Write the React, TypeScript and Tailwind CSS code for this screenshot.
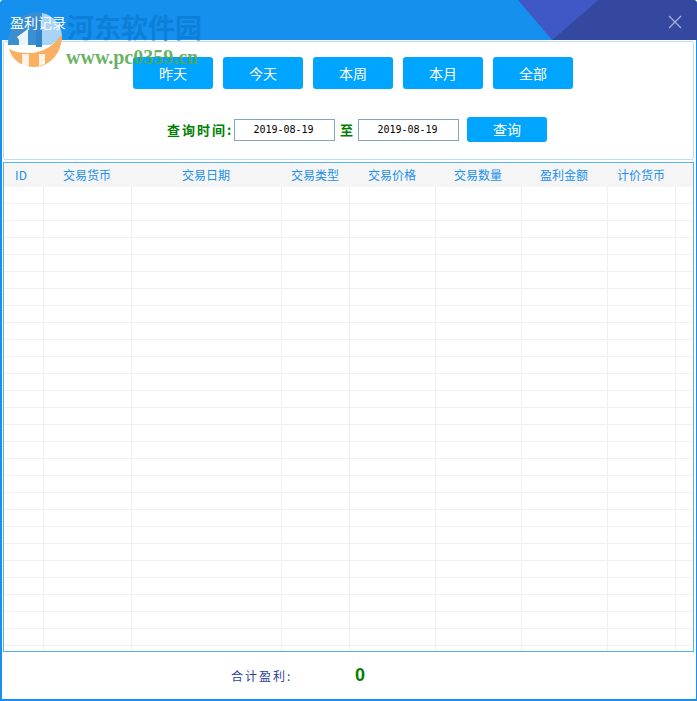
const columns = [
  { title: "ID", width: "w-[40px]", head: "w-[40px] pr-[6px]" },
  { title: "交易货币", width: "w-[88px]", head: "w-[88px] pr-[2px]" },
  { title: "交易日期", width: "w-[150px]", head: "w-[150px] pr-[2px]" },
  { title: "交易类型", width: "w-[68px]", head: "w-[68px] pr-[2px]" },
  { title: "交易价格", width: "w-[86px]", head: "w-[86px] pr-[2px]" },
  { title: "交易数量", width: "w-[86px]", head: "w-[86px] pr-[2px]" },
  { title: "盈利金额", width: "w-[86px]", head: "w-[86px] pr-[2px]" },
  { title: "计价货币", width: "w-[68px]", head: "w-[68px] pr-[2px]" },
];

const quickRanges = ["昨天", "今天", "本周", "本月", "全部"];
const rows = Array.from({ length: 28 }, (_, i) => i);

function Watermark() {
  return (
    <div className="absolute left-0 top-0 z-10 h-[75px] w-[210px] pointer-events-none">
      <svg className="absolute left-0 top-0" width="70" height="75" viewBox="0 0 70 75">
        <path d="M8 44C8 26 21 12 37 12c2 0 4 0 5 1v32H8z" fill="#3a8fd2" />
        <path d="M42 13c11 2 19 11 20 22-3 4-7 7-11 10h-9z" fill="#a9d4f6" />
        <path d="M17 37l11-8v18h-9v-7z" fill="#ffffff" fillOpacity="0.9" />
        <path d="M36 22h6v25h-6z" fill="#2f86cc" />
        <path d="M62 34c1 17-11 33-28 33-12 0-22-7-25-18 6 3 12 4 20 4 14 0 26-8 33-19z" fill="#fab063" />
        <path d="M22 54h7v13h-5c-2-1-2-1-2-2zM39 54h6v10l-6 2z" fill="#ffffff" fillOpacity="0.85" />
      </svg>
      <span className="absolute left-[67px] top-[9px] font-['Liberation_Serif','Noto_Sans_CJK_SC',serif] text-[27px] font-bold leading-[40px] whitespace-nowrap text-[#0d7fd8]">
        河东软件园
      </span>
      <span className="absolute left-[66px] top-[47px] font-['Liberation_Serif',serif] text-[20px] font-bold leading-[20px] whitespace-nowrap text-[#55a84f]/90">
        www.pc0359.cn
      </span>
    </div>
  );
}

function TitleBar() {
  return (
    <div className="relative h-[40px] shrink-0 overflow-hidden bg-[#1590ee]">
      <svg className="absolute left-0 top-0" width="697" height="40" viewBox="0 0 697 40">
        <polygon points="518,0 598,0 552,40" fill="#3f58c5" />
        <polygon points="598,0 697,0 697,40 552,40" fill="#34489f" />
        <path d="M669 16l12 12M681 16l-12 12" stroke="#a9b4dc" strokeWidth="1.2" />
      </svg>
      <span className="absolute left-[10px] top-[13px] z-20 text-[14px] leading-[18px] text-white">盈利记录</span>
    </div>
  );
}

function DateBox() {
  return (
    <div className="flex h-[22px] w-[101px] items-center justify-center border border-[#7fa5c8] bg-white pr-[2px] font-['DejaVu_Sans_Mono',monospace] text-[10px] text-black">
      2019-08-19
    </div>
  );
}

export default function App() {
  return (
    <div className="relative flex h-[701px] w-[697px] flex-col overflow-hidden rounded-t-[4px] bg-[#1590ee] font-['Noto_Sans_CJK_SC','Noto_Sans',sans-serif]">
      <TitleBar />
      <Watermark />
      <div className="flex min-h-0 flex-1 flex-col bg-white ml-[2px] mr-[1px] mb-[2px] pt-[1px] pl-[1px] pr-[2px]">
        <div className="h-[119px] shrink-0 rounded-[2px] border border-[#bcdcf8]">
          <div className="flex gap-[10px] pl-[129px] pt-[15px]">
            {quickRanges.map((label) => (
              <button key={label} className="h-[32px] w-[80px] rounded-[3px] bg-[#00a5ff] text-[14px] text-white">
                {label}
              </button>
            ))}
          </div>
          <div className="mt-[28px] flex h-[25px] items-center pl-[163px]">
            <span className="w-[67px] text-[13px] font-bold tracking-[2px] whitespace-nowrap text-[#008000]">查询时间:</span>
            <DateBox />
            <span className="w-[23px] text-center text-[13px] font-bold text-[#008000]">至</span>
            <DateBox />
            <button className="ml-[8px] h-[25px] w-[80px] rounded-[3px] bg-[#00a5ff] text-[14px] text-white">查询</button>
          </div>
        </div>
        <div className="mt-[2px] h-[490px] shrink-0 overflow-hidden border border-[#55b2ee]">
          <div className="flex h-[24px] bg-[#f5f5f5]">
            {columns.map((col) => (
              <div key={col.title} className={`${col.head} shrink-0 text-center text-[12px] leading-[24px] text-[#2090ec]`}>
                {col.title}
              </div>
            ))}
          </div>
          {rows.map((row) => (
            <div key={row} className="flex h-[17px] border-b border-[#f0f0f0]">
              {columns.map((col) => (
                <div key={col.title} className={`${col.width} shrink-0 border-r border-[#f0f0f0]`} />
              ))}
            </div>
          ))}
        </div>
        <div className="flex flex-1 items-center pl-[228px]">
          <span className="w-[124px] text-[12px] tracking-[2px] text-[#2b3fa0]">合计盈利:</span>
          <span className="font-['Liberation_Sans',sans-serif] text-[18px] font-bold text-[#008000]">0</span>
        </div>
      </div>
    </div>
  );
}
